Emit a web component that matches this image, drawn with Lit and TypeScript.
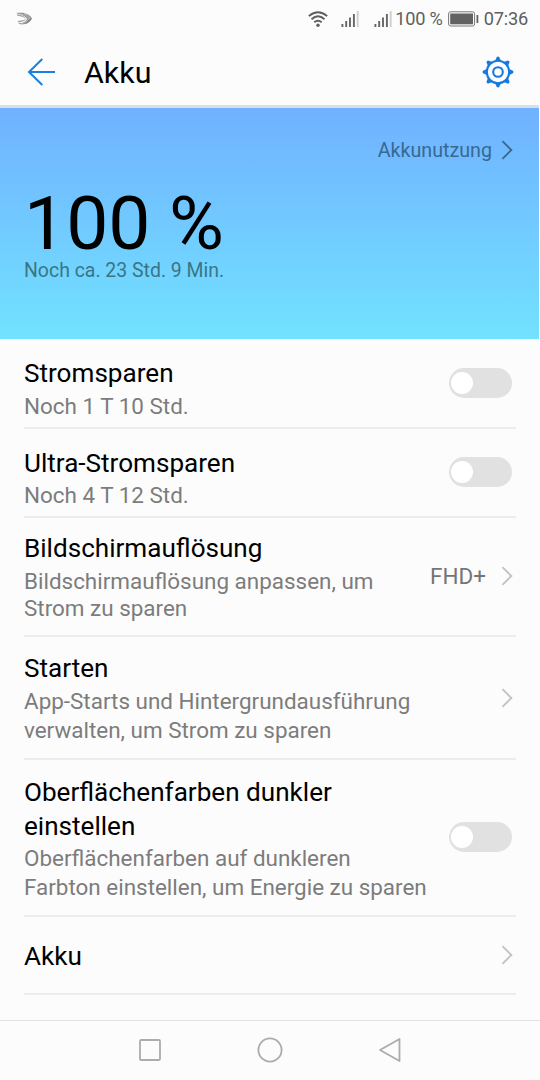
import { LitElement, html, svg, css, nothing } from "lit";
import { customElement, property } from "lit/decorators.js";

@customElement("toggle-switch")
class ToggleSwitch extends LitElement {
  static styles = css`
    :host { display: block; }
    .track { display: flex; align-items: center; box-sizing: border-box; width: 63px; height: 30px; padding-left: 2px; border-radius: 15px; background: #e1e1e1; }
    .knob { width: 22px; height: 22px; border-radius: 50%; background: #fff; }
  `;
  render() {
    return html`<div class="track"><div class="knob"></div></div>`;
  }
}

@customElement("chevron-icon")
class ChevronIcon extends LitElement {
  static styles = css`
    :host { display: block; width: 12px; height: 20px; }
    svg { display: block; }
  `;
  render() {
    return html`<svg width="12" height="20" viewBox="0 0 12 20" fill="none" stroke="currentColor" stroke-width="1.8"><path d="M1.4 1.2 10.4 10 1.4 18.8" /></svg>`;
  }
}

@customElement("setting-row")
class SettingRow extends LitElement {
  @property({ attribute: false }) titleLines: string[] = [];
  @property({ attribute: false }) lines: string[] = [];
  @property() value = "";
  @property() kind = "link";
  static styles = css`
    :host { display: flex; box-sizing: border-box; margin: 0 24px; border-bottom: 2px solid #ececec; }
    .text { flex: 1; white-space: nowrap; }
    .title { font-size: 26.1px; line-height: 34px; color: #000; }
    .sub { margin-top: var(--sub-gap, 1px); font-size: 22.45px; line-height: var(--sub-line, 29px); color: #7c7c7c; }
    .end { display: flex; align-items: center; gap: 15px; height: 30px; margin-top: var(--end, 12px); }
    .value { font-size: 22.47px; line-height: 30px; color: #757575; }
    toggle-switch { margin-right: 4.5px; }
    chevron-icon { color: #c2c2c2; margin-right: 3px; }
  `;
  render() {
    return html`
      <div class="text">
        ${this.titleLines.map((t) => html`<div class="title">${t}</div>`)}
        ${this.lines.length ? html`<div class="sub">${this.lines.map((t) => html`<div>${t}</div>`)}</div>` : nothing}
      </div>
      <div class="end">
        ${this.value ? html`<span class="value">${this.value}</span>` : nothing}
        ${this.kind === "toggle" ? html`<toggle-switch></toggle-switch>` : html`<chevron-icon></chevron-icon>`}
      </div>`;
  }
}

@customElement("app-root")
class AppRoot extends LitElement {
  static styles = css`
    :host { display: flex; flex-direction: column; width: 540px; height: 1080px; overflow: hidden; background: #fcfcfc; font-family: Roboto, sans-serif; }
    svg { display: block; flex: none; }
    .status { display: flex; align-items: center; height: 38px; box-sizing: border-box; padding: 0 12px 1px 15px; color: #5f5f5f; font-size: 18.2px; }
    .brand { margin-right: auto; }
    .wifi { margin-right: 13px; }
    .sim1 { margin-right: 15px; }
    .sim2 { margin-right: 3px; }
    .level { letter-spacing: -.2px; }
    .battery { margin: 0 5px 0 5px; }
    .header { display: flex; align-items: center; height: 67px; box-sizing: border-box; padding: 0 27px 0 27px; }
    .heading { flex: 1; margin-left: 28px; padding-top: 2px; font-size: 30.4px; line-height: 40px; color: #000; }
    .gear { margin-right: -1px; }
    .hero { box-sizing: border-box; width: 539px; height: 234px; border-top: 3px solid #d5e0e8; padding: 27px 26px 0 24px; background: linear-gradient(#70b1ff, #72e2ff) padding-box; }
    .usage { display: flex; justify-content: flex-end; align-items: center; gap: 9px; height: 30px; font-size: 19.7px; color: #396890; }
    .percent { margin-top: 23px; font-size: 75px; line-height: 70px; color: #000; }
    .remaining { margin-top: 1px; font-size: 19.45px; line-height: 24px; color: #397685; }
    .list { flex: 1; }
    .r1 { height: 90px; padding-top: 17px; --end: 12.4px; --sub-gap: 2px; }
    .r2 { height: 89px; padding-top: 17px; --end: 11.4px; }
    .r3 { height: 119px; padding-top: 13px; --end: 30px; --sub-line: 27px; --sub-gap: 3px; }
    .r4 { height: 123px; padding-top: 14px; --end: 31.5px; --sub-gap: 2px; }
    .r5 { height: 157px; padding-top: 15px; --end: 47.4px; }
    .r6 { height: 78px; padding-top: 22px; --end: 1px; }
    .nav { display: flex; justify-content: center; align-items: center; gap: 94px; height: 60px; box-sizing: border-box; padding-bottom: 1px; border-top: 1px solid #e2e2e2; }
  `;
  signal(cls: string) {
    return html`<svg class=${cls} width="18" height="18" viewBox="0 0 18 18" fill="none" stroke="#666" stroke-width="1.9"><path d="M1.4 17v-3M5.2 17v-6M9 17V7.6M12.9 17V4" /><path d="M16.7 17V1" stroke="#cfcfcf" /></svg>`;
  }
  render() {
    return html`
      <div class="status">
        <svg class="brand" width="18" height="14" viewBox="0 0 18 14"><path d="M1 1C7 0 14 .8 17 6.400 14 12 8 13.500 3 11.500 8 11.500 11 9.500 12.500 6.800 10 4 6 2 1 1z" fill="#858585" /><path d="M3 10.200Q8 10.500 12 6.800 8 8.800 3 8.900zM2 2.200Q8 3 12 6.800 7 4.500 2 3.500z" fill="#a0a0a0" /><path d="M5 1.600Q11 2.300 14.500 6.500 11 11.500 5.500 12M9 1.400Q14 3 15.500 6.400" fill="none" stroke="#ddd" stroke-width=".6" /></svg>
        <svg class="wifi" width="20" height="18" viewBox="0 0 20 18" fill="none" stroke="#5f5f5f" stroke-width="1.9"><path d="M.8 6.100Q10-1.800 19.200 6.100M3.500 9.300Q10 3.400 16.500 9.300M6.300 12.300Q10 9 13.700 12.300" /><circle cx="10" cy="15.300" r="1.700" fill="#5f5f5f" stroke="none" /></svg>
        ${this.signal("sim1")}${this.signal("sim2")}
        <span class="level">100 %</span>
        <svg class="battery" width="31" height="16" viewBox="0 0 31 16"><rect x=".6" y=".8" width="26" height="14.200" rx="2" fill="none" stroke="#777" /><rect x="2.200" y="2.500" width="22.800" height="10.800" fill="#626262" /><path d="M28.500 4h1.800v8h-1.800z" fill="#626262" /></svg>
        <span class="level">07:36</span>
      </div>
      <div class="header">
        <svg width="29" height="30" viewBox="0 0 29 30" fill="none" stroke="#1a7fdf" stroke-width="2"><path d="M28 15H2M15.300 2 2 15l13.300 13" /></svg>
        <div class="heading">Akku</div>
        <svg class="gear" width="32" height="32" viewBox="-16 -16 32 32" fill="none" stroke="#1579dd" stroke-width="2.100">
          <circle r="11.200" /><circle r="4.800" />
          ${[0, 45, 90, 135, 180, 225, 270, 315].map((a) => svg`<path transform="rotate(${a})" d="M-2.900-11.500-1.700-13.800a1.700 1.700 0 0 1 3.400 0l1.200 2.300z" fill="#1579dd" stroke="none" />`)}
        </svg>
      </div>
      <div class="hero">
        <div class="usage"><span>Akkunutzung</span><chevron-icon></chevron-icon></div>
        <div class="percent">100 %</div>
        <div class="remaining">Noch ca. 23 Std. 9 Min.</div>
      </div>
      <div class="list">
        <setting-row class="r1" kind="toggle" .titleLines=${["Stromsparen"]} .lines=${["Noch 1 T 10 Std."]}></setting-row>
        <setting-row class="r2" kind="toggle" .titleLines=${["Ultra-Stromsparen"]} .lines=${["Noch 4 T 12 Std."]}></setting-row>
        <setting-row class="r3" value="FHD+" .titleLines=${["Bildschirmauflösung"]} .lines=${["Bildschirmauflösung anpassen, um", "Strom zu sparen"]}></setting-row>
        <setting-row class="r4" .titleLines=${["Starten"]} .lines=${["App-Starts und Hintergrundausführung", "verwalten, um Strom zu sparen"]}></setting-row>
        <setting-row class="r5" kind="toggle" .titleLines=${["Oberflächenfarben dunkler", "einstellen"]} .lines=${["Oberflächenfarben auf dunkleren", "Farbton einstellen, um Energie zu sparen"]}></setting-row>
        <setting-row class="r6" .titleLines=${["Akku"]}></setting-row>
      </div>
      <div class="nav">
        <svg width="26" height="26" viewBox="0 0 26 26" fill="none" stroke="#acacac" stroke-width="1.800"><rect x="3" y="3" width="20" height="20" rx="1" /></svg>
        <svg width="26" height="26" viewBox="0 0 26 26" fill="none" stroke="#acacac" stroke-width="1.800"><circle cx="13" cy="13" r="11.600" /></svg>
        <svg width="26" height="26" viewBox="0 0 26 26" fill="none" stroke="#acacac" stroke-width="1.800" stroke-linejoin="round"><path d="M22.500 2v22L3 13z" /></svg>
      </div>`;
  }
}
